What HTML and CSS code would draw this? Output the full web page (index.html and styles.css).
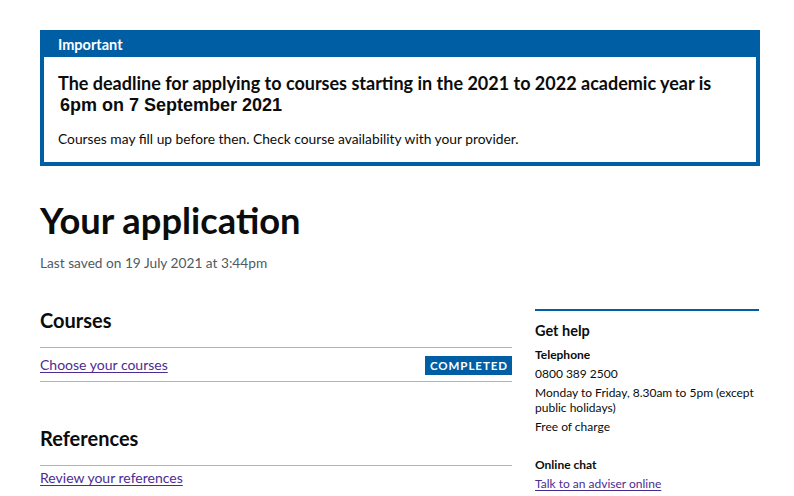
FILE: index.html
```html
<!DOCTYPE html>
<html lang="en">
<head>
<meta charset="utf-8">
<title>Your application</title>
<link rel="stylesheet" href="styles.css">
</head>
<body>
<div class="page">
  <div class="banner">
    <div class="banner-header">Important</div>
    <div class="banner-content">
      <p class="banner-heading">The deadline for applying to courses starting in the 2021 to 2022 academic year is <span class="fallback">6pm on 7 September 2021</span></p>
      <p class="banner-body">Courses may fill up before then. Check course availability with your provider.</p>
    </div>
  </div>

  <h1 class="title">Your application</h1>
  <p class="caption">Last saved on 19 July 2021 at 3:44pm</p>

  <div class="layout">
    <div class="main">
      <section class="section">
        <h2 class="section-title">Courses</h2>
        <ul class="task-list">
          <li class="task"><a class="link" href="#">Choose your courses</a><strong class="tag">Completed</strong></li>
        </ul>
      </section>
      <section class="section">
        <h2 class="section-title">References</h2>
        <ul class="task-list">
          <li class="task task-compact"><a class="link" href="#">Review your references</a></li>
        </ul>
      </section>
    </div>
    <aside class="sidebar">
      <h2 class="side-title">Get help</h2>
      <h3 class="side-sub">Telephone</h3>
      <p class="side-text">0800 389 2500</p>
      <p class="side-text">Monday to Friday, 8.30am to 5pm (except public holidays)</p>
      <p class="side-text">Free of charge</p>
      <h3 class="side-sub side-sub-gap">Online chat</h3>
      <p class="side-text"><a class="link" href="#">Talk to an adviser online</a></p>
    </aside>
  </div>
</div>
</body>
</html>
```

FILE: styles.css
```css
* { box-sizing: border-box; }
html, body { margin: 0; padding: 0; background: #fff; }
body {
  font-family: "Lato", "Liberation Sans", sans-serif;
  color: #0b0c0c;
}
.page {
  width: 720px;
  margin-left: 40px;
  padding-top: 30px;
}
.banner {
  border: 4px solid #005ea5;
  border-top: 0;
  background: #fff;
}
.banner-header {
  background: #005ea5;
  color: #fff;
  font-weight: 700;
  font-size: 14.5px;
  line-height: 17px;
  padding: 6px 14px 4px 18px;
  margin: 0 -4px;
}
.banner-content {
  padding: 16px 14px 14px 14px;
}
.banner-heading {
  margin: 0 0 14px 0;
  font-size: 18px;
  line-height: 21px;
  font-weight: 700;
}
.fallback {
  font-family: "Liberation Sans", Arial, sans-serif;
  padding-left: 2px;
}
.banner-body {
  margin: 0;
  font-size: 13.8px;
  line-height: 18px;
}
.title {
  margin: 32px 0 0 0;
  font-size: 36.3px;
  line-height: 44px;
  font-weight: 700;
}
.caption {
  margin: 12px 0 0 0;
  font-size: 13.7px;
  line-height: 18px;
  color: #505a5f;
}
.layout {
  display: grid;
  grid-template-columns: 472px 224px;
  column-gap: 23px;
  margin-top: 26px;
}
.main { padding-top: 10px; }
.section { margin-bottom: 44px; }
.section-title {
  margin: 0 0 15px 0;
  font-size: 20px;
  line-height: 24px;
  font-weight: 700;
}
.task-list {
  list-style: none;
  margin: 0;
  padding: 0;
  border-top: 1px solid #b1b4b6;
}
.task {
  display: flex;
  justify-content: space-between;
  align-items: center;
  padding: 7px 0 6px 0;
  border-bottom: 1px solid #b1b4b6;
  font-size: 14px;
  line-height: 20px;
}
.task-compact {
  padding-top: 2px;
  border-bottom: 0;
}
.link {
  color: #4c2c92;
  text-decoration: underline;
  text-underline-offset: 2px;
}
.tag {
  background: #005ea5;
  color: #fff;
  font-size: 11.5px;
  line-height: 14px;
  font-weight: 700;
  text-transform: uppercase;
  letter-spacing: 0.95px;
  padding: 3px 4px 2px 5px;
}
.sidebar {
  border-top: 2px solid #005ea5;
  padding-top: 11px;
  margin-top: 11px;
  align-self: start;
}
.side-title {
  margin: 0 0 7px 0;
  font-size: 14.5px;
  line-height: 18px;
  font-weight: 700;
}
.side-sub {
  margin: 0 0 3px 0;
  font-size: 12px;
  line-height: 16px;
  font-weight: 700;
}
.side-sub-gap { margin-top: 23px; }
.side-text {
  margin: 0 0 4px 0;
  font-size: 12px;
  line-height: 15px;
}
```
